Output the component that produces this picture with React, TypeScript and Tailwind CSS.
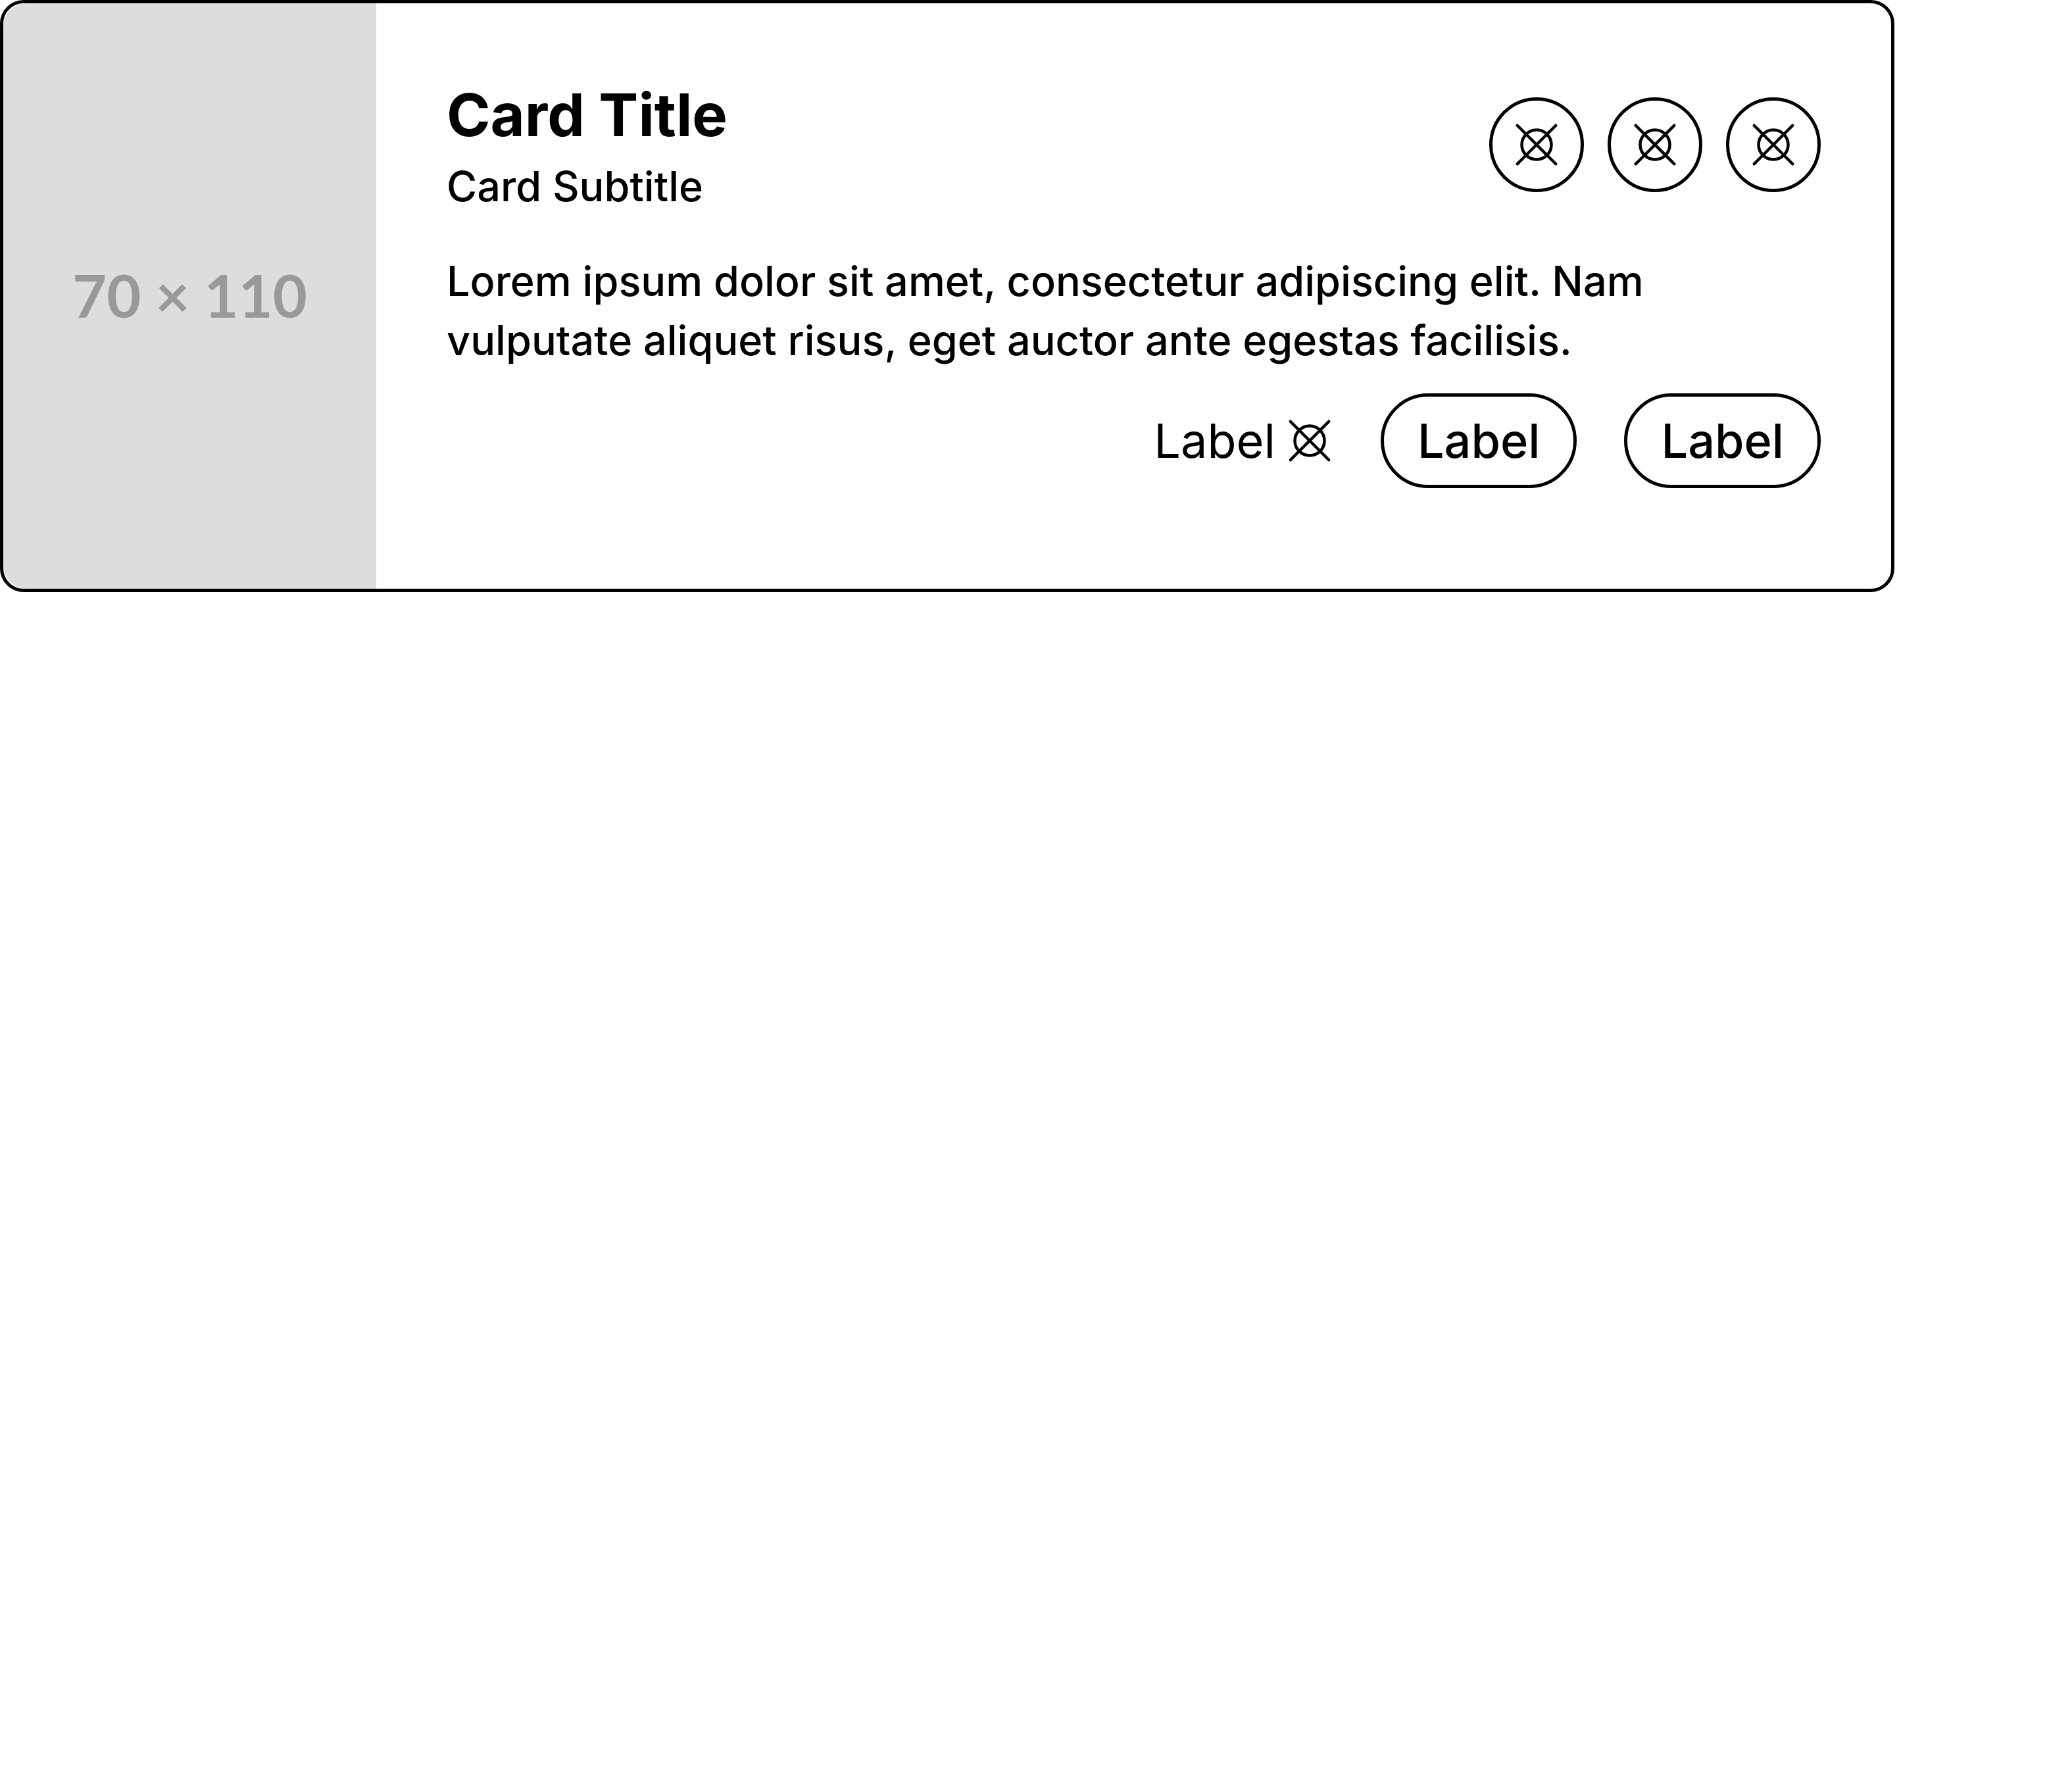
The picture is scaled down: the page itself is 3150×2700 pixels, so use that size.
import React from "react";

function CircleCrossIcon() {
  return (
    <svg
      viewBox="0 0 16 16"
      className="size-[72px] shrink-0"
      fill="none"
      stroke="currentColor"
      strokeWidth="1"
      strokeLinecap="round"
      aria-hidden="true"
    >
      <circle cx="8" cy="8" r="5" />
      <path d="M1.5 1.5l13 13M14.5 1.5l-13 13" />
    </svg>
  );
}

function IconButton({ label }: { label: string }) {
  return (
    <button
      type="button"
      aria-label={label}
      className="flex size-[144px] items-center justify-center rounded-full border-[5px] border-black"
    >
      <CircleCrossIcon />
    </button>
  );
}

function PillButton({ children }: { children: React.ReactNode }) {
  return (
    <button
      type="button"
      className="h-[144px] rounded-full border-[5px] border-black px-[51px] text-7xl font-medium"
    >
      {children}
    </button>
  );
}

export default function App() {
  return (
    <main className="font-['Inter',sans-serif] text-black">
      <article className="flex min-h-[900px] w-full max-w-[2880px] rounded-[36px] border-[5px] border-black bg-white">
        <div className="flex w-[567px] shrink-0 items-center justify-center rounded-l-[36px] bg-[#dddddd] pb-1 font-['Lato',sans-serif] text-[90px] font-bold text-[#999999]">
          70 × 110
        </div>
        <div className="flex min-w-0 flex-1 flex-col p-[107px]">
          <header className="flex items-center justify-between">
            <div>
              <h2 className="text-[90px] leading-[126px] font-bold">Card Title</h2>
              <p className="text-[63px] leading-[90px] font-medium">Card Subtitle</p>
            </div>
            <div className="flex gap-9">
              <IconButton label="First action" />
              <IconButton label="Second action" />
              <IconButton label="Third action" />
            </div>
          </header>
          <p className="mt-[54px] text-[63px] leading-[90px] font-medium">
            Lorem ipsum dolor sit amet, consectetur adipiscing elit. Nam vulputate aliquet risus, eget auctor ante egestas facilisis.
          </p>
          <div className="mt-9 flex items-center justify-end gap-[72px]">
            <button type="button" className="flex items-center gap-4 text-7xl">
              Label
              <CircleCrossIcon />
            </button>
            <PillButton>Label</PillButton>
            <PillButton>Label</PillButton>
          </div>
        </div>
      </article>
    </main>
  );
}
